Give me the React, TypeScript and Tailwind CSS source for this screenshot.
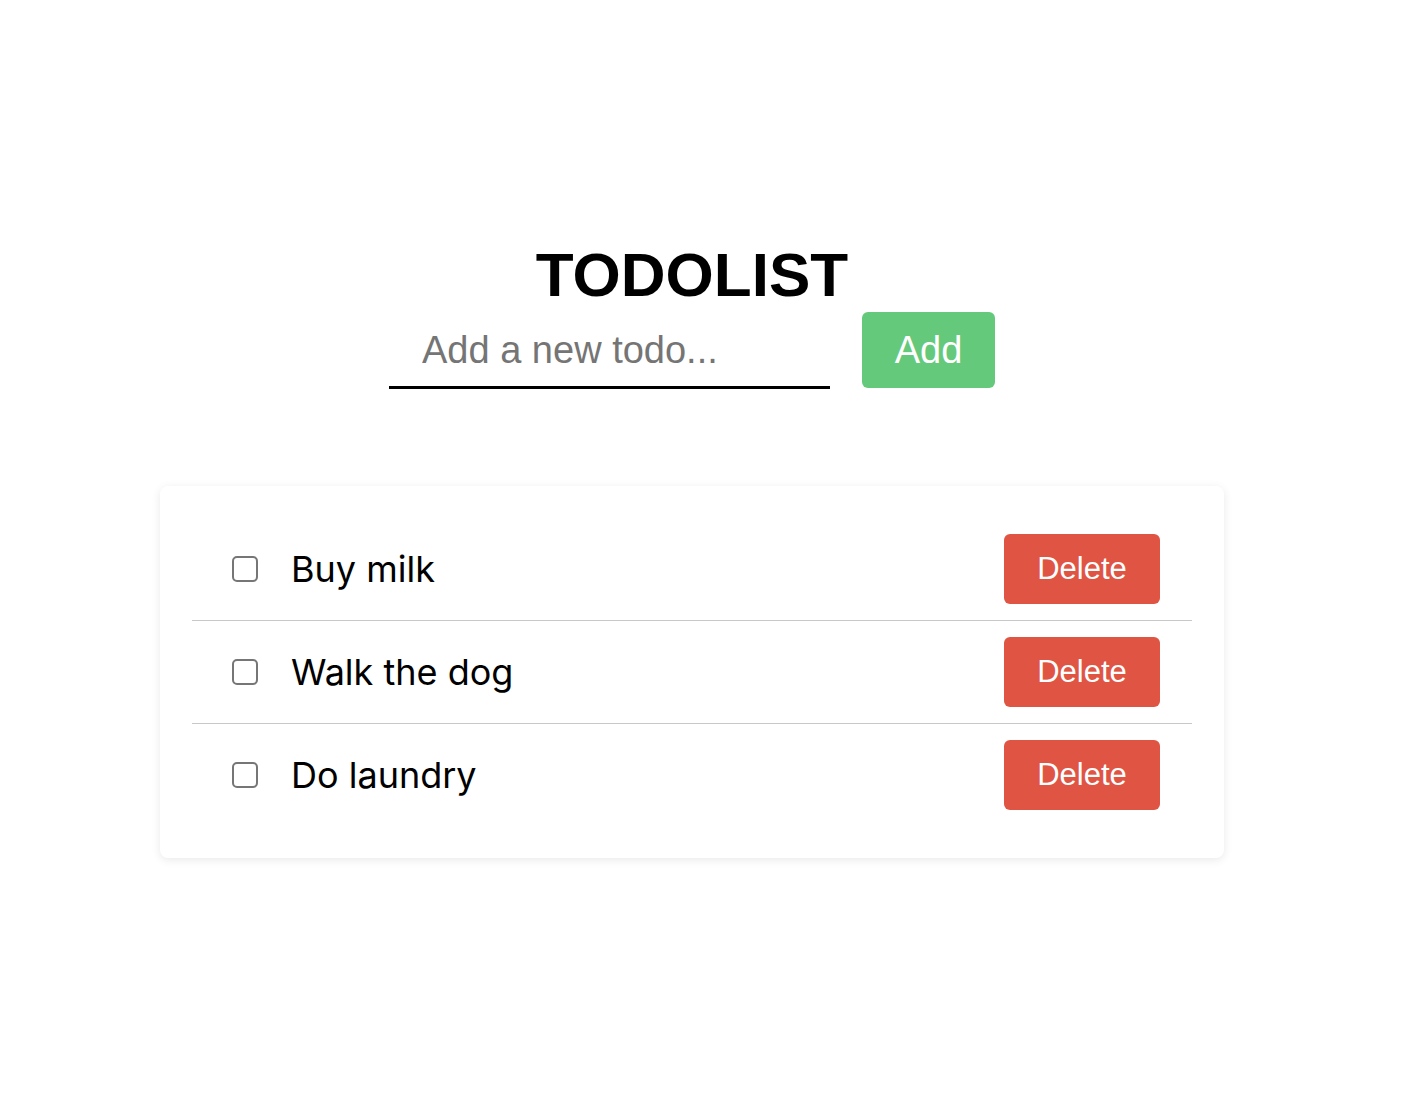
import { useState } from 'react';

type Todo = { id: number; text: string; done: boolean };

export default function App() {
    const [todos, setTodos] = useState<Todo[]>([
        { id: 1, text: 'Buy milk', done: false },
        { id: 2, text: 'Walk the dog', done: false },
        { id: 3, text: 'Do laundry', done: false },
    ]);
    const [draft, setDraft] = useState('');

    const addTodo = () => {
        if (!draft.trim()) return;
        setTodos([...todos, { id: Date.now(), text: draft.trim(), done: false }]);
        setDraft('');
    };

    return (
        <div className="min-h-screen bg-white font-['Liberation_Sans',Arial,sans-serif]">
            <div className="flex w-[1384px] flex-col items-center pt-[241px]">
                <h1 className="text-[62px] font-bold leading-[68px] text-black">TODOLIST</h1>

                <div className="mt-[3px] flex items-start gap-8">
                    <input
                        value={draft}
                        onChange={(e) => setDraft(e.target.value)}
                        placeholder="Add a new todo..."
                        className="h-[77px] w-[441px] border-b-[3px] border-black pl-[33px] pt-[2px] text-[38px] text-black outline-none placeholder:text-[#757575]"
                    />
                    <button
                        onClick={addTodo}
                        className="h-[76px] w-[133px] rounded-[6px] bg-[#64c97a] text-[38px] text-white">
                        Add
                    </button>
                </div>

                <ul className="mt-[97px] w-[1064px] rounded-[8px] bg-white px-8 py-8 shadow-[0_2px_10px_rgba(0,0,0,0.09)]">
                    {todos.map((todo, i) => (
                        <li
                            key={todo.id}
                            className={`flex items-center py-4 pl-10 pr-8 ${i < todos.length - 1 ? 'border-b border-[#c8c8c8]' : ''}`}>
                            <input
                                type="checkbox"
                                checked={todo.done}
                                onChange={() =>
                                    setTodos(todos.map((t) => (t.id === todo.id ? { ...t, done: !t.done } : t)))
                                }
                                className="h-[26px] w-[26px] appearance-none rounded-[5px] border-2 border-[#767676] bg-white checked:bg-[#767676]"
                            />
                            <span className="ml-[33px] flex-1 font-['Inter',sans-serif] text-[36px] text-black">
                                {todo.text}
                            </span>
                            <button
                                onClick={() => setTodos(todos.filter((t) => t.id !== todo.id))}
                                className="h-[70px] w-[156px] rounded-[6px] bg-[#e05444] text-[31px] text-white">
                                Delete
                            </button>
                        </li>
                    ))}
                </ul>
            </div>
        </div>
    );
}
